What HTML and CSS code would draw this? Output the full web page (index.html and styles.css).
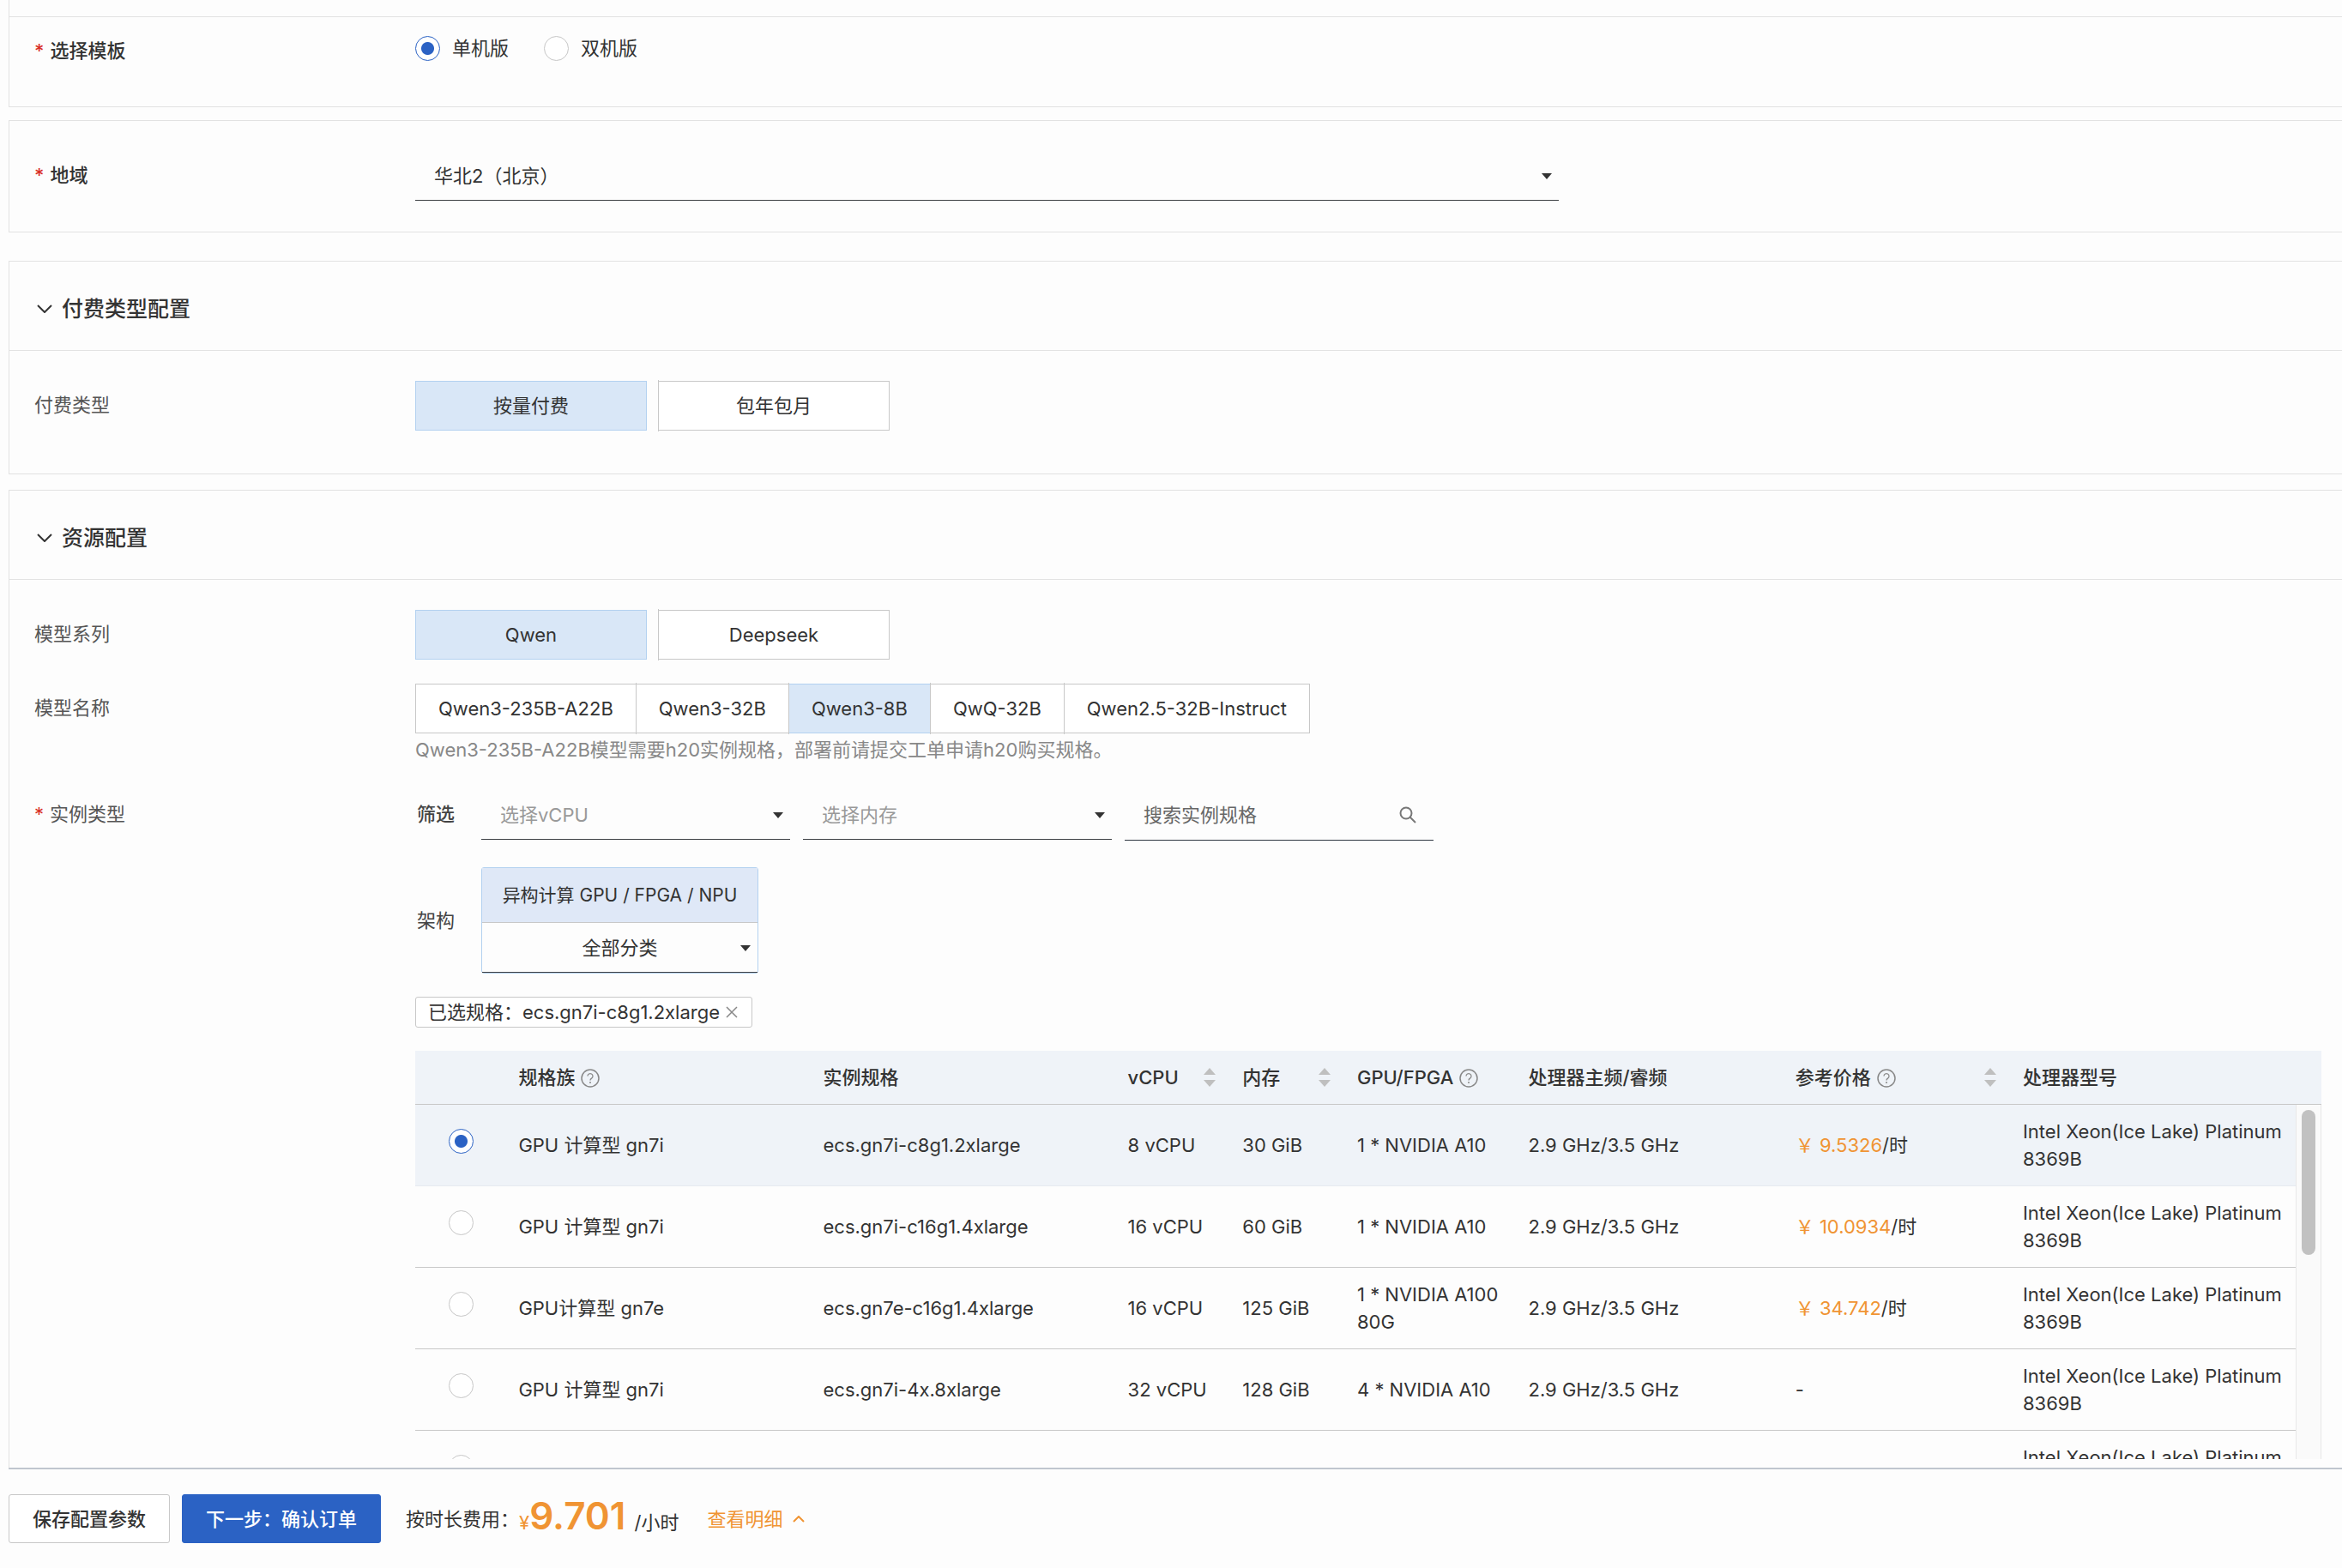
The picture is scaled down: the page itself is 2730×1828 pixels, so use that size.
FILE: index.html
```
<!DOCTYPE html>
<html lang="zh-CN">
<head>
<meta charset="UTF-8" />
<meta name="viewport" content="width=device-width, initial-scale=1" />
<title>创建服务实例</title>
<link rel="stylesheet" href="styles.css">
</head>
<body>

<!-- 公用图标 -->
<svg class="icon-defs" aria-hidden="true">
  <symbol id="icon-help" viewBox="0 0 22 22">
    <circle cx="11" cy="11" r="10" fill="none" stroke="currentColor" stroke-width="1.5" />
    <path d="M8 8.5a3 3 0 1 1 4.600 2.600c-1.100.7-1.600 1.200-1.600 2.400" fill="none" stroke="currentColor" stroke-width="1.300" />
    <circle cx="11" cy="16" r="1" fill="currentColor" />
  </symbol>
  <symbol id="icon-sort" viewBox="0 0 14 22">
    <path d="M7 0l7 8H0zM7 22l7-8H0z" fill="currentColor" />
  </symbol>
  <symbol id="icon-down" viewBox="0 0 18 10">
    <path d="M1 1l8 8 8-8" fill="none" stroke="currentColor" stroke-width="2" />
  </symbol>
</svg>

<main>
  <section class="card card-first">
    <div class="prev-row"></div>
    <div class="row row-template">
      <div class="label required strong">选择模板</div>
      <div class="radios">
        <label><input type="radio" name="template" checked>单机版</label>
        <label><input type="radio" name="template">双机版</label>
      </div>
    </div>
  </section>

  <section class="card card-region">
    <div class="row">
      <label class="label required strong" for="region">地域</label>
      <div class="select select-region">
        <select id="region"><option>华北2（北京）</option></select>
      </div>
    </div>
  </section>

  <section class="card card-pay">
    <h2><svg class="chevron"><use href="#icon-down" /></svg>付费类型配置</h2>
    <div class="row row-pay">
      <div class="label">付费类型</div>
      <div class="segments wide">
        <button type="button" class="active">按量付费</button>
        <button type="button">包年包月</button>
      </div>
    </div>
  </section>

  <section class="card card-resource">
    <h2><svg class="chevron"><use href="#icon-down" /></svg>资源配置</h2>

    <div class="row">
      <div class="label">模型系列</div>
      <div class="segments wide">
        <button type="button" class="active">Qwen</button>
        <button type="button">Deepseek</button>
      </div>
    </div>

    <div class="row row-model">
      <div class="label">模型名称</div>
      <div>
        <div class="segments joined">
          <button type="button">Qwen3-235B-A22B</button>
          <button type="button">Qwen3-32B</button>
          <button type="button" class="active">Qwen3-8B</button>
          <button type="button">QwQ-32B</button>
          <button type="button">Qwen2.5-32B-Instruct</button>
        </div>
        <p class="hint">Qwen3-235B-A22B模型需要h20实例规格，部署前请提交工单申请h20购买规格。</p>
      </div>
    </div>

    <div class="row row-instance">
      <div class="label required">实例类型</div>
      <div class="instance">
        <div class="filter">
          <label class="filter-label strong" for="vcpu">筛选</label>
          <div class="select muted"><select id="vcpu"><option>选择vCPU</option></select></div>
          <div class="select muted"><select aria-label="内存"><option>选择内存</option></select></div>
          <div class="search">
            <input type="text" placeholder="搜索实例规格" aria-label="搜索实例规格">
            <svg viewBox="0 0 20 20"><circle cx="8" cy="8" r="6.5" /><path d="M12.5 12.5L19 19" /></svg>
          </div>
        </div>

        <div class="filter filter-arch">
          <label class="filter-label" for="category">架构</label>
          <div class="arch">
            <button type="button">异构计算 GPU / FPGA / NPU</button>
            <div class="select"><select id="category"><option>全部分类</option></select></div>
          </div>
        </div>

        <div class="tag">
          <span>已选规格：ecs.gn7i-c8g1.2xlarge</span>
          <button type="button" aria-label="清除"><svg viewBox="0 0 14 14"><path d="M1 1l12 12M13 1L1 13" /></svg></button>
        </div>

        <div class="table-box">
          <div class="table-scroll">
            <table>
              <colgroup>
                <col class="c-radio"><col class="c-family"><col class="c-spec"><col class="c-cpu"><col class="c-mem"><col class="c-gpu"><col class="c-freq"><col class="c-price"><col>
              </colgroup>
              <thead>
                <tr>
                  <th></th>
                  <th>规格族<svg class="help"><use href="#icon-help" /></svg></th>
                  <th>实例规格</th>
                  <th><div class="sortable">vCPU<svg class="sort"><use href="#icon-sort" /></svg></div></th>
                  <th><div class="sortable">内存<svg class="sort"><use href="#icon-sort" /></svg></div></th>
                  <th>GPU/FPGA<svg class="help"><use href="#icon-help" /></svg></th>
                  <th>处理器主频/睿频</th>
                  <th><div class="sortable"><span>参考价格<svg class="help"><use href="#icon-help" /></svg></span><svg class="sort"><use href="#icon-sort" /></svg></div></th>
                  <th>处理器型号</th>
                </tr>
              </thead>
              <tbody>
                <tr class="selected">
                  <td><input type="radio" name="spec" aria-label="ecs.gn7i-c8g1.2xlarge" checked></td>
                  <td>GPU 计算型 gn7i</td>
                  <td>ecs.gn7i-c8g1.2xlarge</td>
                  <td>8 vCPU</td>
                  <td>30 GiB</td>
                  <td>1 * NVIDIA A10</td>
                  <td>2.9 GHz/3.5 GHz</td>
                  <td><span class="price">￥ 9.5326</span>/时</td>
                  <td>Intel Xeon(Ice Lake) Platinum 8369B</td>
                </tr>
                <tr>
                  <td><input type="radio" name="spec" aria-label="ecs.gn7i-c16g1.4xlarge"></td>
                  <td>GPU 计算型 gn7i</td>
                  <td>ecs.gn7i-c16g1.4xlarge</td>
                  <td>16 vCPU</td>
                  <td>60 GiB</td>
                  <td>1 * NVIDIA A10</td>
                  <td>2.9 GHz/3.5 GHz</td>
                  <td><span class="price">￥ 10.0934</span>/时</td>
                  <td>Intel Xeon(Ice Lake) Platinum 8369B</td>
                </tr>
                <tr>
                  <td><input type="radio" name="spec" aria-label="ecs.gn7e-c16g1.4xlarge"></td>
                  <td>GPU计算型 gn7e</td>
                  <td>ecs.gn7e-c16g1.4xlarge</td>
                  <td>16 vCPU</td>
                  <td>125 GiB</td>
                  <td>1 * NVIDIA A100 80G</td>
                  <td>2.9 GHz/3.5 GHz</td>
                  <td><span class="price">￥ 34.742</span>/时</td>
                  <td>Intel Xeon(Ice Lake) Platinum 8369B</td>
                </tr>
                <tr>
                  <td><input type="radio" name="spec" aria-label="ecs.gn7i-4x.8xlarge"></td>
                  <td>GPU 计算型 gn7i</td>
                  <td>ecs.gn7i-4x.8xlarge</td>
                  <td>32 vCPU</td>
                  <td>128 GiB</td>
                  <td>4 * NVIDIA A10</td>
                  <td>2.9 GHz/3.5 GHz</td>
                  <td>-</td>
                  <td>Intel Xeon(Ice Lake) Platinum 8369B</td>
                </tr>
                <tr>
                  <td><input type="radio" name="spec" aria-label="更多规格"></td>
                  <td></td>
                  <td></td>
                  <td></td>
                  <td></td>
                  <td></td>
                  <td></td>
                  <td></td>
                  <td>Intel Xeon(Ice Lake) Platinum 8369B</td>
                </tr>
              </tbody>
            </table>
          </div>
          <div class="scrollbar">
            <div class="scrollbar-head"></div>
            <div class="scrollbar-track"><div class="scrollbar-thumb"></div></div>
          </div>
        </div>
      </div>
    </div>
  </section>
</main>

<footer>
  <button type="button" class="btn">保存配置参数</button>
  <button type="button" class="btn primary">下一步：确认订单</button>
  <span class="cost-label">按时长费用：</span>
  <div class="cost">
    <span class="yen">¥</span><strong>9.701</strong>
    <span class="unit">/小时</span>
  </div>
  <a href="#" class="detail">查看明细<svg viewBox="0 0 14 8"><path d="M1 7l6-6 6 6" /></svg></a>
</footer>

</body>
</html>
```
FILE: styles.css
```
* {
  box-sizing: border-box;
}

body {
  margin: 0;
  min-height: 100vh;
  display: flex;
  flex-direction: column;
  background: #fdfdfd;
  color: #333;
  font-family: Inter, "Noto Sans CJK SC", sans-serif;
  font-size: 22px;
  line-height: 32px;
  overflow-x: hidden;
}

button, input, select {
  font: inherit;
  color: inherit;
}
button {
  cursor: pointer;
}
.icon-defs {
  display: none;
}

main {
  flex: 1;
  display: flex;
  flex-direction: column;
  padding-left: 10px;
}

/* 卡片 */
.card {
  border: 1px solid #e2e2e2;
  border-right: 0;
}
.card-first {
  border-top: 0;
  height: 125px;
}
.prev-row {
  height: 20px;
  border-bottom: 1px solid #e2e2e2;
}
.card-region {
  margin-top: 15px;
  height: 131px;
  padding-top: 35px;
}
.card-pay {
  margin-top: 33px;
  height: 249px;
}
.card-resource {
  margin-top: 18px;
  flex: 1;
  border-bottom: 0;
}
.card h2 {
  display: flex;
  align-items: center;
  gap: 11px;
  height: 104px;
  margin: 0 0 35px;
  padding: 6px 0 0 32px;
  border-bottom: 1px solid #e2e2e2;
  font-size: 25px;
  font-weight: 500;
}
.chevron {
  width: 18px;
  height: 10px;
}

/* 表单行 */
.row {
  display: grid;
  grid-template-columns: 444px 1fr;
  padding: 0 24px 0 29px;
}
.label {
  padding-top: 12px;
  color: #555;
}
.strong {
  color: #333;
  font-weight: 500;
}
.required::before {
  content: "*";
  margin-right: 7px;
  color: #d93026;
}
.row-template {
  padding-top: 11px;
}
.row-model {
  margin-top: 28px;
}
.row-instance {
  margin-top: 31px;
}

/* 单选框 */
input[type="radio"] {
  appearance: none;
  display: block;
  width: 29px;
  height: 29px;
  margin: 0;
  border: 1px solid #c6c6c6;
  border-radius: 50%;
  background: #fff;
}
input[type="radio"]:checked {
  border-color: #2b62c4;
  background: radial-gradient(circle, #2b62c4 7px, #fff 8px);
}
.radios {
  display: flex;
  gap: 41px;
  padding-top: 9px;
}
.radios label {
  display: flex;
  align-items: center;
  gap: 14px;
  height: 32px;
}

/* 下拉框 */
.select {
  position: relative;
  width: 360px;
}
.select select {
  appearance: none;
  display: block;
  width: 100%;
  height: 58px;
  padding: 0 40px 0 22px;
  border: 0;
  border-bottom: 1px solid #3c3f43;
  border-radius: 0;
  background: transparent;
}
.select::after {
  content: "";
  position: absolute;
  top: 26px;
  right: 8px;
  border: 6px solid transparent;
  border-top: 7px solid #333;
  border-bottom: 0;
}
.select-region {
  width: 60%;
}
.muted select {
  color: #999;
}

/* 按钮组 */
.segments {
  display: flex;
}
.segments button {
  position: relative;
  height: 58px;
  padding: 0 26px;
  border: 1px solid #c8c8c8;
  background: #fff;
}
.segments .active {
  border-color: #b3d1f0;
  background: #d9e7f7;
}
.wide {
  gap: 13px;
}
.wide button {
  width: 270px;
}
.joined button + button {
  border-left: 0;
}
/* 分隔线比按钮略高 */
.segments button + button::before {
  content: "";
  position: absolute;
  top: -2px;
  bottom: -2px;
  left: -1px;
  width: 1px;
  background: #c8c8c8;
}
.hint {
  margin: 3px 0 0;
  color: #888;
}

/* 筛选 */
.instance {
  min-width: 0;
}
.filter {
  display: flex;
  gap: 15px;
}
.filter-label {
  width: 62px;
  padding: 12px 0 0 2px;
  color: #444;
}
.search {
  display: flex;
  align-items: center;
  width: 360px;
  height: 59px;
  padding: 0 20px 0 22px;
  border-bottom: 1px solid #2f3742;
}
.search input {
  flex: 1;
  min-width: 0;
  padding: 0;
  border: 0;
  outline: 0;
  background: transparent;
}
.search input::placeholder {
  color: #666;
  opacity: 1;
}
.search svg {
  width: 20px;
  height: 20px;
  fill: none;
  stroke: #777;
  stroke-width: 2;
}
.filter-arch {
  align-items: center;
  margin-top: 31px;
}
.filter-arch .filter-label {
  padding-top: 0;
}
.arch {
  width: 323px;
  border: 1px solid #b3d1f0;
  border-radius: 3px;
}
.arch button {
  display: block;
  width: 100%;
  height: 64px;
  padding: 0;
  border: 0;
  border-bottom: 1px solid #c8c8c8;
  background: #dfe8f7;
  font-size: 21px;
}
.arch .select {
  width: 100%;
}
.arch select {
  padding: 0 40px;
  text-align-last: center;
}

/* 已选规格 */
.tag {
  display: inline-flex;
  align-items: center;
  gap: 7px;
  height: 36px;
  margin: 27px 0;
  padding: 0 16px 0 14px;
  border: 1px solid #c8c8c8;
  border-radius: 3px;
  background: #fff;
}
.tag button {
  display: flex;
  padding: 0;
  border: 0;
  background: none;
}
.tag svg {
  width: 14px;
  height: 14px;
  stroke: #888;
  stroke-width: 1.5;
}

/* 规格表 */
.table-box {
  display: flex;
  height: 476px;
}
.table-scroll {
  flex: 1;
  overflow: hidden;
}
table {
  width: 100%;
  table-layout: fixed;
  border-collapse: separate;
  border-spacing: 0;
}
.c-radio { width: 4.9%; }
.c-family, .c-spec { width: 16.2%; }
.c-cpu, .c-mem { width: 6.1%; }
.c-gpu { width: 9.1%; }
.c-freq { width: 14.2%; }
.c-price { width: 12.1%; }

th, td {
  padding: 0 13px;
  border-bottom: 1px solid #c8c8c8;
  text-align: left;
}
th {
  height: 63px;
  background: #eff3f8;
  font-weight: 500;
  white-space: nowrap;
}
td {
  height: 95px;
}
td:last-child {
  padding-right: 0;
}
td:first-child {
  padding: 0 0 9px 39px;
}
.selected td {
  border-color: #e6eaef;
  background: #eff3f8;
}
.help {
  width: 22px;
  height: 22px;
  margin-left: 7px;
  vertical-align: -4px;
  color: #888;
}
.sortable {
  display: flex;
  align-items: center;
  justify-content: space-between;
}
.sort {
  width: 14px;
  height: 22px;
  margin-right: 5px;
  color: #bfbfbf;
}
.price {
  color: #f09433;
}

.scrollbar {
  display: flex;
  flex-direction: column;
  width: 30px;
}
.scrollbar-head {
  height: 63px;
  border-bottom: 1px solid #c8c8c8;
  background: #eff3f8;
}
.scrollbar-track {
  flex: 1;
  padding: 6px;
  border: 1px solid #e8e8e8;
  border-width: 0 1px;
  background: #fafafa;
}
.scrollbar-thumb {
  height: 169px;
  border-radius: 8px;
  background: #c1c1c1;
}

/* 底部操作栏 */
footer {
  display: flex;
  align-items: center;
  height: 117px;
  margin-left: 10px;
  border-top: 2px solid #c0c6cf;
}
.btn {
  height: 57px;
  margin-right: 14px;
  padding: 0 27px;
  border: 1px solid #c8c8c8;
  border-radius: 3px;
  background: #fff;
  font-weight: 500;
}
.primary {
  border-color: #2b62c4;
  background: #2b62c4;
  color: #fff;
  margin-right: 29px;
}
.cost {
  display: flex;
  align-items: baseline;
}
.yen, .cost strong {
  color: #f09433;
}
.cost strong {
  font-size: 44px;
  font-weight: 600;
}
.unit {
  margin-left: 10px;
}
.detail {
  display: flex;
  align-items: center;
  gap: 12px;
  margin-left: 33px;
  color: #f09433;
  text-decoration: none;
}
.detail svg {
  width: 14px;
  height: 8px;
  fill: none;
  stroke: currentColor;
  stroke-width: 2;
}
```
